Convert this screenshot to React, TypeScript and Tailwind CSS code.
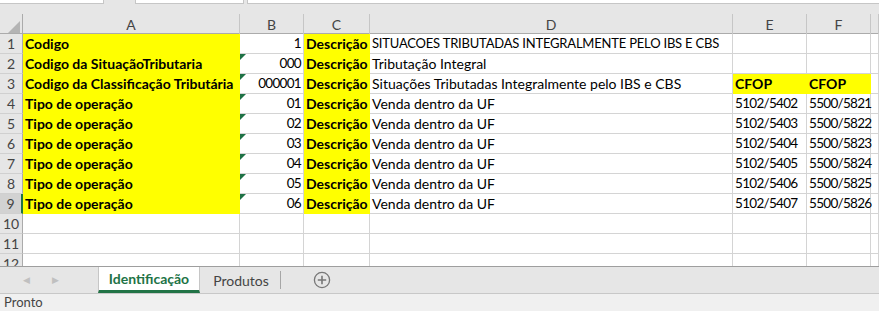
import React from "react";

const font = { fontFamily: "Lato, 'Liberation Sans', sans-serif" };

const rows = [
  { a: "Codigo", b: "1", c: "Descrição", d: "SITUACOES TRIBUTADAS INTEGRALMENTE PELO IBS E CBS", e: "", f: "", tri: false },
  { a: "Codigo da SituaçãoTributaria", b: "000", c: "Descrição", d: "Tributação Integral", e: "", f: "", tri: true },
  { a: "Codigo da Classificação Tributária", b: "000001", c: "Descrição", d: "Situações Tributadas Integralmente pelo IBS e CBS", e: "CFOP", f: "CFOP", tri: true },
  { a: "Tipo de operação", b: "01", c: "Descrição", d: "Venda dentro da UF", e: "5102/5402", f: "5500/5821", tri: true },
  { a: "Tipo de operação", b: "02", c: "Descrição", d: "Venda dentro da UF", e: "5102/5403", f: "5500/5822", tri: true },
  { a: "Tipo de operação", b: "03", c: "Descrição", d: "Venda dentro da UF", e: "5102/5404", f: "5500/5823", tri: true },
  { a: "Tipo de operação", b: "04", c: "Descrição", d: "Venda dentro da UF", e: "5102/5405", f: "5500/5824", tri: true },
  { a: "Tipo de operação", b: "05", c: "Descrição", d: "Venda dentro da UF", e: "5102/5406", f: "5500/5825", tri: true },
  { a: "Tipo de operação", b: "06", c: "Descrição", d: "Venda dentro da UF", e: "5102/5407", f: "5500/5826", tri: true },
];

const cols = ["A", "B", "C", "D", "E", "F", ""];
const gridCols = "grid grid-cols-[23px_217px_64px_66px_363px_74px_64px_1fr]";

function Cell({
  children,
  yellow,
  bold,
  right,
  tri,
  num,
  caps,
}: {
  children?: React.ReactNode;
  yellow?: boolean;
  bold?: boolean;
  right?: boolean;
  tri?: boolean;
  num?: boolean;
  caps?: boolean;
}) {
  return (
    <div
      className={`relative h-5 border-r border-b px-[2px] flex items-end pb-[1px] text-[14px] leading-[17px] text-black whitespace-nowrap ${
        yellow ? "bg-[#ffff00] border-[#ffff00]" : "bg-white border-[#d4d4d4]"
      } ${bold ? "font-bold" : ""} ${right ? "justify-end" : ""}`}
    >
      {tri && (
        <div className="absolute left-0 top-0 w-0 h-0 border-t-[6px] border-t-[#1e7145] border-r-[6px] border-r-transparent" />
      )}
      {children && (
        <span
          className={`relative z-10 ${num ? "text-[13.5px] tracking-[-0.7px]" : ""} ${caps ? "text-[13px] tracking-[-0.2px]" : ""}`}
        >
          {children}
        </span>
      )}
    </div>
  );
}

function RowHead({ n, active }: { n: number; active?: boolean }) {
  return (
    <div
      className={`h-5 flex items-center justify-center text-[14px] text-[#444] border-b border-[#d0d0d0] ${
        active ? "bg-[#d2d2d2] border-r-2 border-r-[#217346]" : "bg-[#e6e6e6] border-r border-r-[#ababab]"
      }`}
    >
      {n}
    </div>
  );
}

export default function App() {
  return (
    <div className="w-[879px] h-[311px] overflow-hidden bg-[#e6e6e6] flex flex-col" style={font}>
      {/* formula bar remnant */}
      <div className="flex h-[4px] shrink-0">
        <div className="w-[104px] bg-white border-r border-b border-[#c6c6c6]" />
        <div className="w-[31px]" />
        <div className="w-[109px] bg-white border-x border-b border-[#c6c6c6]" />
        <div className="w-[3px]" />
        <div className="flex-1 bg-white border-l border-b border-[#c6c6c6]" />
      </div>
      <div className="h-[10px] shrink-0" />

      {/* column headers */}
      <div className={`${gridCols} h-5 shrink-0 border-b border-[#ababab]`}>
        <div className="relative border-r border-[#ababab]">
          <div className="absolute right-[2px] bottom-[2px] w-0 h-0 border-b-[12px] border-b-[#b4b4b4] border-l-[12px] border-l-transparent" />
        </div>
        {cols.map((c, i) => (
          <div key={i} className="flex items-center justify-center border-r border-[#c6c6c6] text-[14px] text-[#444]">
            {c}
          </div>
        ))}
      </div>

      {/* sheet body */}
      <div className="flex-1 overflow-hidden">
        {rows.map((r, i) => (
          <div key={i} className={gridCols}>
            <RowHead n={i + 1} active={i === 8} />
            <Cell yellow bold>{r.a}</Cell>
            <Cell right tri={r.tri} num>{r.b}</Cell>
            <Cell yellow bold>{r.c}</Cell>
            <Cell caps={i === 0}>{r.d}</Cell>
            <Cell yellow={i === 2} bold={i === 2} num={i > 2}>{r.e}</Cell>
            <Cell yellow={i === 2} bold={i === 2} num={i > 2}>{r.f}</Cell>
            <Cell />
          </div>
        ))}
        {[10, 11, 12].map((n) => (
          <div key={n} className={gridCols}>
            <RowHead n={n} />
            <Cell />
            <Cell />
            <Cell />
            <Cell />
            <Cell />
            <Cell />
            <Cell />
          </div>
        ))}
      </div>

      {/* sheet tabs */}
      <div className="h-[27px] shrink-0 flex items-stretch border-t border-[#9e9e9e] bg-[#e6e6e6]">
        <div className="w-[98px] flex items-center gap-[22px] pl-[23px] text-[9px] text-[#c0c0c0]">
          <span>◀</span>
          <span>▶</span>
        </div>
        <div className="w-[102px] bg-white border-x border-[#c6c6c6] flex items-center justify-center border-b-[3px] border-b-[#217346] text-[14px] font-bold text-[#217346]">
          Identificação
        </div>
        <div className="w-[80px] flex items-center justify-center text-[14px] text-[#444]">
          <span className="pl-[2px]">Produtos</span>
        </div>
        <div className="my-[4px] w-px bg-[#a6a6a6]" />
        <div className="w-[82px] flex items-center justify-center">
          <svg width="18" height="18" viewBox="0 0 18 18" fill="none" stroke="#777" strokeWidth="1.3">
            <circle cx="9" cy="9" r="7.6" />
            <path d="M9 4.8v8.4M4.8 9h8.4" strokeWidth="1.6" />
          </svg>
        </div>
      </div>

      {/* status bar */}
      <div className="h-[18px] shrink-0 bg-[#f0f0f0] border-t border-[#c8c8c8] flex items-center pl-[4px] text-[13px] text-[#444]">
        Pronto
      </div>
    </div>
  );
}
